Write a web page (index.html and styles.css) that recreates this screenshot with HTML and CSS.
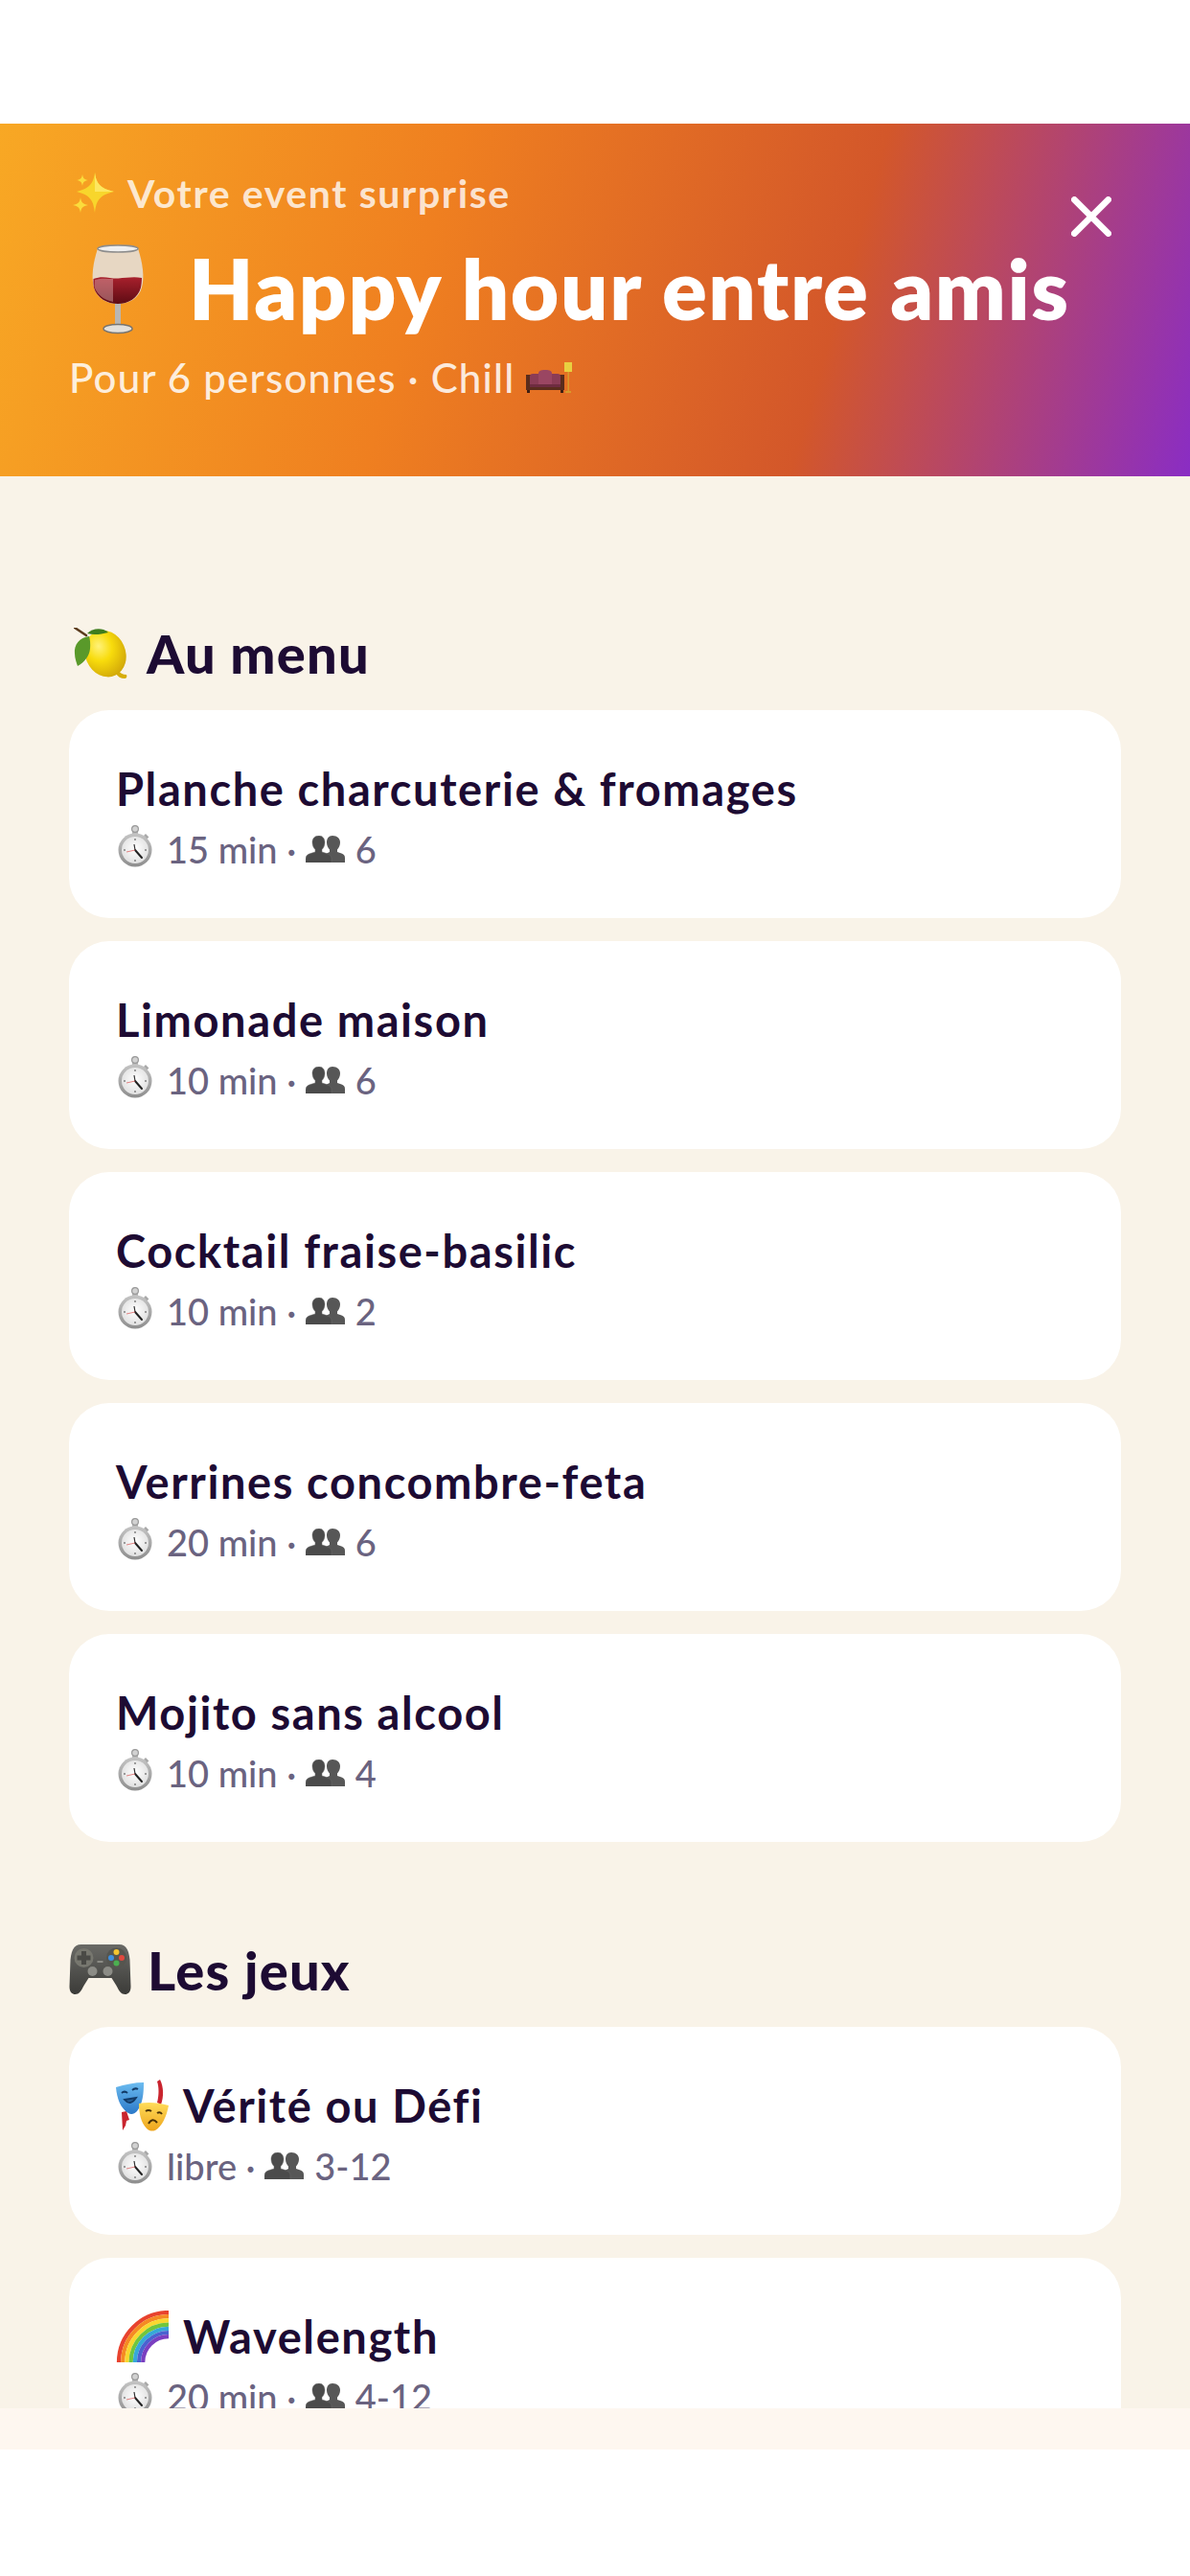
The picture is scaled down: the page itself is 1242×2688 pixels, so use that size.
FILE: index.html
```html
<!DOCTYPE html>
<html lang="fr">
<head>
  <meta charset="UTF-8" />
  <meta name="viewport" content="width=device-width, initial-scale=1.0"/>
  <title>Votre event surprise</title>
  <link rel="stylesheet" href="styles.css">
</head>
<body>
  <svg class="icon-defs" aria-hidden="true">
    <defs>
      <radialGradient id="lemonFill" cx="0.42" cy="0.3" r="0.8">
        <stop offset="0" stop-color="#fff27a"/>
        <stop offset="0.4" stop-color="#f8dc0c"/>
        <stop offset="1" stop-color="#c99c08"/>
      </radialGradient>
      <linearGradient id="padFill" x1="0" y1="0" x2="0" y2="1">
        <stop offset="0" stop-color="#6a6a66"/>
        <stop offset="1" stop-color="#3b3b38"/>
      </linearGradient>
      <linearGradient id="wineFill" x1="0" y1="0" x2="0" y2="1">
        <stop offset="0" stop-color="#a8202c"/>
        <stop offset="1" stop-color="#5e0c14"/>
      </linearGradient>
      <linearGradient id="blueMask" x1="0" y1="0" x2="0" y2="1">
        <stop offset="0" stop-color="#6cbcf0"/>
        <stop offset="1" stop-color="#2a78c8"/>
      </linearGradient>
      <linearGradient id="yellowMask" x1="0" y1="0" x2="0" y2="1">
        <stop offset="0" stop-color="#ffdc5a"/>
        <stop offset="1" stop-color="#eea51c"/>
      </linearGradient>
      <radialGradient id="watchFace" cx="0.5" cy="0.45" r="0.6">
        <stop offset="0" stop-color="#ffffff"/>
        <stop offset="1" stop-color="#dedede"/>
      </radialGradient>
      <linearGradient id="watchRing" x1="0" y1="0" x2="0" y2="1">
        <stop offset="0" stop-color="#c4c4c4"/>
        <stop offset="1" stop-color="#8e8e8e"/>
      </linearGradient>

      <symbol id="i-watch" viewBox="0 0 36 44">
        <rect x="15" y="4" width="6" height="6" fill="#b5b5b5"/>
        <circle cx="18" cy="4" r="3.4" fill="#d2d2d2" stroke="#999" stroke-width="1.2"/>
        <path d="M29 9l3.400 3.400-2.200 2.200-3.400-3.400z" fill="#a8a8a8"/>
        <circle cx="18" cy="26" r="17.500" fill="url(#watchRing)"/>
        <circle cx="18" cy="26" r="14" fill="url(#watchFace)"/>
        <path d="M18 26l7 8" stroke="#222" stroke-width="2" stroke-linecap="round"/>
        <path d="M18 26l-1-6" stroke="#333" stroke-width="1.200"/>
        <path d="M18 26l-9 2" stroke="#d66" stroke-width="0.8"/>
        <circle cx="18" cy="15" r="0.9" fill="#777"/><circle cx="29" cy="26" r="0.9" fill="#777"/>
        <circle cx="18" cy="37" r="0.9" fill="#777"/><circle cx="7" cy="26" r="0.9" fill="#777"/>
      </symbol>

      <symbol id="i-people" viewBox="0 0 41 28">
        <path d="M28 0c-4 0-6 3-6 7 0 3 1.300 6 3 7.500v2.500l-5 2.500 2 8.500h19v-5c0-3-2-4-5-5l-3-1v-2.500c1.700-1.500 3-4.500 3-7.500 0-4-3-7-8-7z" fill="#575757"/>
        <path d="M14 0c-4.500 0-7 3-7 7 0 3 1.300 6 3 7.500v2.500l-5 1.600c-3 1-5 2.400-5 5.400v4.500h27v-4.500c0-3-2-4.400-5-5.400l-5-1.600v-2.500c1.700-1.500 3-4.500 3-7.500 0-4-2.500-7-6-7z" fill="#4b4b4b" stroke="#6a6a6a" stroke-width="0.5"/>
      </symbol>
    </defs>
  </svg>

  <div class="status-gap"></div>

  <header class="hero">
    <p class="kicker">
      <svg class="kicker-icon" viewBox="0 0 48 42">
        <path d="M27 0c1.500 11 5 16.500 20 20-15 3.500-18.500 9-20 22-1.500-13-5-18.500-19-22 14-3.500 17.500-9 19-20z" fill="#f8d62c"/>
        <path d="M27 0c1.500 11 5 16.500 20 20H27z" fill="#fde760"/>
        <path d="M14 2c.7 4 1.800 5.200 6 6-4.200.8-5.300 2-6 6-.7-4-1.800-5.200-6-6 4.200-.8 5.300-2 6-6z" fill="#fbdc3c"/>
        <path d="M12 26c.8 5 2.200 7 8 8-5.800 1-7.200 3-8 8-.8-5-2.200-7-8-8 5.800-1 7.200-3 8-8z" fill="#fbdc3c"/>
      </svg>
      Votre event surprise
    </p>
    <h1 class="hero-title">
      <svg class="wine-icon" viewBox="0 0 56 94">
        <path d="M7 4C2 20 0 34 3 45c3 11 13 17 25 17s22-6 25-17c3-11 1-25-4-41z" fill="#e4e2df" fill-opacity="0.85"/>
        <path d="M2.500 36c10-4 18 0 26-.5 8-.5 16-2 24.500-.5 0 4-.5 7-1 10-3 11-13 17-24 17S6 56 3 45c-.5-3-.7-6-.5-9z" fill="url(#wineFill)"/>
        <path d="M4 37c7-2 13-1 19-1v24C13 58 6 52 3.500 44z" fill="#e8c4c2" fill-opacity="0.4"/>
        <ellipse cx="28" cy="4.500" rx="21" ry="3.500" fill="#efefef" stroke="#8d8d8d" stroke-width="1.500"/>
        <rect x="25" y="62" width="6" height="24" fill="#b9b6b2"/>
        <ellipse cx="28" cy="88" rx="15" ry="4.500" fill="#e2e0dc" stroke="#77746f" stroke-width="1.500"/>
      </svg>
      Happy hour entre amis
    </h1>
    <p class="hero-sub">
      Pour 6 personnes · Chill
      <svg class="couch-icon" viewBox="0 0 50 34">
        <rect x="1" y="14" width="40" height="16" fill="#5a2c1c"/>
        <rect x="2" y="30" width="3" height="3" fill="#3e1e12"/>
        <rect x="37" y="30" width="3" height="3" fill="#3e1e12"/>
        <path d="M5 26V16c0-2 1-3 3-3h7v13z" fill="#8b3c56"/>
        <path d="M27 26V13h7c2 0 3 1 3 3v10z" fill="#8b3c56"/>
        <path d="M14 26V13c0-3 2-4 7-4s7 1 7 4v13z" fill="#9a4662"/>
        <rect x="5" y="24" width="32" height="3" fill="#6e2c40"/>
        <rect x="41" y="1" width="8" height="10" fill="#e8d040"/>
        <rect x="44.500" y="11" width="1.500" height="20" fill="#d89a2c"/>
        <rect x="42" y="31" width="6" height="2" fill="#d89a2c"/>
      </svg>
    </p>
    <button class="close-btn" aria-label="Fermer">
      <svg viewBox="0 0 38 38"><path d="M3 3l32 32M35 3L3 35"/></svg>
    </button>
  </header>

  <main class="content">
    <section class="group">
      <h2 class="group-title">
        <svg class="group-icon lemon" viewBox="0 0 56 53">
          <path d="M1 0l12 8" stroke="#5a3a1c" stroke-width="2.500" stroke-linecap="round"/>
          <path d="M46 44c2 3 5 5 9 5 1 2 0 4-2 4-4 0-7-2-9-5z" fill="#d6ad0a"/>
          <ellipse cx="33" cy="27" rx="21" ry="25" transform="rotate(-24 33 27)" fill="url(#lemonFill)"/>
          <path d="M14 6c5-5 15-7 22-1-8 2-15 3-22 1z" fill="#3f7d1e"/>
          <path d="M16 9C6 10 0 18 1 27c0 5 2 10 3 13 7-4 12-10 13-18 .5-5 0-10-1-13z" fill="#59992a"/>
        </svg>
        Au menu
      </h2>
      <ul class="card-list">
        <li class="card">
          <div class="card-title">Planche charcuterie &amp; fromages</div>
          <div class="card-meta"><svg class="watch"><use href="#i-watch"/></svg>15 min · <svg class="people"><use href="#i-people"/></svg>6</div>
        </li>
        <li class="card">
          <div class="card-title">Limonade maison</div>
          <div class="card-meta"><svg class="watch"><use href="#i-watch"/></svg>10 min · <svg class="people"><use href="#i-people"/></svg>6</div>
        </li>
        <li class="card">
          <div class="card-title">Cocktail fraise-basilic</div>
          <div class="card-meta"><svg class="watch"><use href="#i-watch"/></svg>10 min · <svg class="people"><use href="#i-people"/></svg>2</div>
        </li>
        <li class="card">
          <div class="card-title">Verrines concombre-feta</div>
          <div class="card-meta"><svg class="watch"><use href="#i-watch"/></svg>20 min · <svg class="people"><use href="#i-people"/></svg>6</div>
        </li>
        <li class="card">
          <div class="card-title">Mojito sans alcool</div>
          <div class="card-meta"><svg class="watch"><use href="#i-watch"/></svg>10 min · <svg class="people"><use href="#i-people"/></svg>4</div>
        </li>
      </ul>
    </section>

    <section class="group">
      <h2 class="group-title">
        <svg class="group-icon pad" viewBox="0 0 64 54">
          <path d="M12 1h40c7 0 10 6 11 16l1 28c0 6-3 8-6 8-4 0-6-3-9-9l-5-8H20l-5 8c-3 6-5 9-9 9-3 0-6-2-6-8l1-28C2 7 5 1 12 1z" fill="url(#padFill)"/>
          <circle cx="15" cy="15" r="10" fill="#77776f"/>
          <path d="M12.500 8h5v4.500H22v5h-4.500V22h-5v-4.500H8v-5h4.500z" fill="#4a4a46"/>
          <circle cx="49" cy="15" r="10.500" fill="#55554f"/>
          <circle cx="49" cy="9" r="3" fill="#f4c430"/>
          <circle cx="43.500" cy="15" r="3" fill="#3d8fe0"/>
          <circle cx="54.500" cy="15" r="3" fill="#e0483e"/>
          <circle cx="49" cy="20.500" r="3" fill="#4caf50"/>
          <circle cx="24" cy="29" r="5" fill="#8c8c86"/>
          <circle cx="40" cy="29" r="5" fill="#8c8c86"/>
          <rect x="29" y="18" width="6" height="2" fill="#8c8c86"/>
        </svg>
        Les jeux
      </h2>
      <ul class="card-list">
        <li class="card">
          <div class="card-title">
            <svg class="title-icon" viewBox="0 0 56 54">
              <path d="M46 0c4 8 4 18 1 26l-4-2c2-8 2-16 0-22zM6 34l5-1 3 9-3 1-1 5-3 5z" fill="#c9242e"/>
              <path d="M0 8c9-3 20-5 29-5 0 12-1 22-7 30-3 3-6 4-9 2C5 30 1 20 0 8z" fill="url(#blueMask)"/>
              <path d="M6 14q3-3 6 0M17 11q3-3 6-1M9 21q6 7 12-2z" stroke="#123a66" stroke-width="1.800" fill="#123a66" fill-opacity="0.6"/>
              <path d="M24 25c10-2 20-1 31 2-2 11-7 22-14 26-3 1-6 1-9-2-6-6-8-16-8-26z" fill="url(#yellowMask)"/>
              <path d="M31 33q3-2 6 0M43 35q3-2 5 1M34 46q4-7 9-1" stroke="#4a3208" stroke-width="2" fill="none"/>
            </svg>
            Vérité ou Défi
          </div>
          <div class="card-meta"><svg class="watch"><use href="#i-watch"/></svg>libre · <svg class="people"><use href="#i-people"/></svg>3-12</div>
        </li>
        <li class="card">
          <div class="card-title">
            <svg class="title-icon" viewBox="0 0 54 54" fill="none" stroke-width="4.200">
              <path d="M2 54A52 52 0 0 1 54 2" stroke="#e8432e"/>
              <path d="M6.200 54A47.800 47.800 0 0 1 54 6.200" stroke="#f58a23"/>
              <path d="M10.400 54A43.600 43.600 0 0 1 54 10.400" stroke="#f9d72f"/>
              <path d="M14.600 54A39.400 39.400 0 0 1 54 14.600" stroke="#71c63c"/>
              <path d="M18.800 54A35.200 35.200 0 0 1 54 18.800" stroke="#36a8d8"/>
              <path d="M23 54A31 31 0 0 1 54 23" stroke="#4a62d0"/>
              <path d="M27.200 54A26.800 26.800 0 0 1 54 27.200" stroke="#7a3fc0"/>
            </svg>
            Wavelength
          </div>
          <div class="card-meta"><svg class="watch"><use href="#i-watch"/></svg>20 min · <svg class="people"><use href="#i-people"/></svg>4-12</div>
        </li>
      </ul>
    </section>
  </main>

  <div class="footer-strip"></div>
</body>
</html>
```

FILE: styles.css
```css
* {
  box-sizing: border-box;
}

body {
  margin: 0;
  background: #fff;
  font-family: "Lato", "Open Sans", sans-serif;
  color: #1d0b33;
}

.icon-defs {
  position: absolute;
  width: 0;
  height: 0;
}

.status-gap {
  height: 129px;
}

.hero {
  position: relative;
  height: 368px;
  padding: 47px 72px 0;
  background: linear-gradient(106deg, #f8a824 0%, #ef7f20 36%, #d3572a 69%, #8a2dc4 100%);
  color: #fff;
}

.kicker {
  display: flex;
  align-items: center;
  gap: 13px;
  margin: 0;
  height: 50px;
  font-size: 41px;
  font-weight: 700;
  letter-spacing: 1.6px;
  color: rgba(255, 255, 255, 0.8);
}

.kicker-icon {
  width: 48px;
  height: 42px;
}

.hero-title {
  display: flex;
  align-items: center;
  gap: 46px;
  margin: 26px 0 0;
  height: 96px;
  padding-left: 23px;
  font-size: 87px;
  font-weight: 800;
  letter-spacing: 1.6px;
  white-space: nowrap;
}

.wine-icon {
  width: 56px;
  height: 94px;
  margin-top: 4px;
  flex: none;
}

.hero-sub {
  display: flex;
  align-items: center;
  gap: 11px;
  margin: 21px 0 0;
  height: 50px;
  font-size: 42px;
  font-weight: 500;
  letter-spacing: 1.2px;
  color: rgba(255, 255, 255, 0.85);
}

.couch-icon {
  width: 50px;
  height: 34px;
}

.close-btn {
  position: absolute;
  top: 76px;
  right: 82px;
  width: 42px;
  height: 42px;
  padding: 0;
  border: 0;
  background: none;
}

.close-btn svg {
  display: block;
  width: 42px;
  height: 42px;
  fill: none;
  stroke: #fff;
  stroke-width: 6;
  stroke-linecap: round;
}

.content {
  height: 2016px;
  padding: 151px 72px 0;
  overflow: hidden;
  background: #f9f3e8;
}

.group + .group {
  margin-top: 100px;
}

.group-title {
  display: flex;
  align-items: center;
  gap: 17px;
  height: 66px;
  margin: 0 0 27px;
  font-size: 56px;
  font-weight: 900;
  letter-spacing: 1.2px;
}

.group-icon.lemon {
  width: 56px;
  height: 53px;
  margin: 0 3px 0 5px;
}

.group-icon.pad {
  width: 65px;
  height: 54px;
}

.card-list {
  display: flex;
  flex-direction: column;
  gap: 24px;
  margin: 0;
  padding: 0;
  list-style: none;
}

.card {
  height: 217px;
  padding: 52px 49px 0;
  border-radius: 42px;
  background: #fff;
}

.card-title {
  display: flex;
  align-items: center;
  gap: 14px;
  height: 60px;
  font-size: 47px;
  font-weight: 700;
  letter-spacing: 1.6px;
  white-space: nowrap;
}

.title-icon {
  width: 56px;
  height: 54px;
  flex: none;
}

.card-meta {
  display: flex;
  align-items: center;
  height: 48px;
  margin-top: 9px;
  font-size: 38px;
  font-weight: 500;
  color: #6a6380;
  white-space: pre;
}

.watch {
  width: 36px;
  height: 44px;
  margin: -6px 15px 0 2px;
  flex: none;
}

.people {
  width: 41px;
  height: 28px;
  margin-right: 11px;
  flex: none;
}

.footer-strip {
  height: 43px;
  background: #fef7f0;
}
```
